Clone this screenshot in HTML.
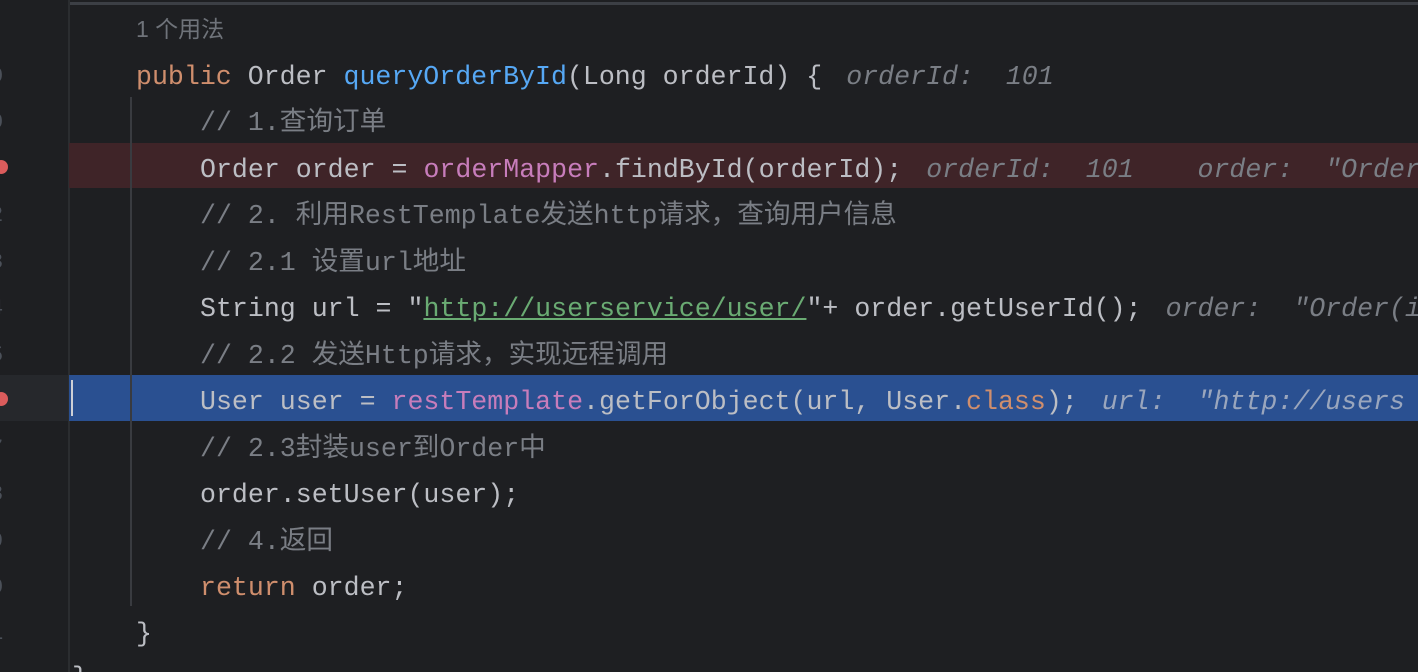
<!DOCTYPE html>
<html style="overflow:hidden;height:672px"><head><meta charset="utf-8"><style>
html,body{margin:0;overflow:hidden}
body{width:1418px;height:672px;background:#1e1f22;position:relative;font-family:"Liberation Mono","Noto Sans CJK SC",monospace;font-size:26.6px;color:#bcbec4}
#w{position:absolute;left:0;top:0;width:1418px;height:672px;overflow:hidden}
.l{position:absolute;left:0;height:46px;line-height:46px;white-space:pre}
.c{left:136px}.i{left:200px}
.k{color:#cf8e6d}.m{color:#56a8f5}.f{color:#c77dbb}.s{color:#6aab73;text-decoration:underline}.cm{color:#7a7e85}
.h{color:#7a7e85;font-style:italic;margin-left:8px}
.n{position:absolute;left:-10px;color:#4b5059;font-size:22px;height:46px;line-height:46px}
.bp{position:absolute;left:-6px;width:14px;height:14px;border-radius:50%;background:#db5c5c}
</style></head><body><div id="w">
<div style="position:absolute;left:68px;top:0;width:2px;height:672px;background:#2b2d30"></div>
<div style="position:absolute;left:70px;top:2px;right:0;height:3px;background:#3c3f45"></div>
<div style="position:absolute;left:69px;top:143px;right:0;height:45px;background:#3f2428"></div>
<div style="position:absolute;left:0;top:375px;width:68px;height:46px;background:#26282c"></div>
<div style="position:absolute;left:69px;top:375px;right:0;height:46px;background:#2a5091"></div>
<div style="position:absolute;left:71px;top:380px;width:2px;height:36px;background:#ced0d6"></div>
<div style="position:absolute;left:130px;top:97px;width:2px;height:509px;background:#393b40"></div>
<div class="n" style="top:54px">0</div><div class="n" style="top:100px">0</div>
<div class="bp" style="top:160px"></div><div class="n" style="top:193px">2</div>
<div class="n" style="top:240px">3</div><div class="n" style="top:286px">4</div><div class="n" style="top:333px">5</div>
<div class="bp" style="top:392px"></div><div class="n" style="top:426px">7</div><div class="n" style="top:472px">8</div>
<div class="n" style="top:519px">9</div><div class="n" style="top:565px">0</div><div class="n" style="top:611px">1</div>
<div class="l c" style="top:6px;font-family:'Liberation Sans','Noto Sans CJK SC',sans-serif;font-size:23px;color:#6f737a">1 个用法</div>
<div class="l c" style="top:54px"><span class="k">public</span> Order <span class="m">queryOrderById</span>(Long orderId) { <span class="h">orderId:  101</span></div>
<div class="l i cm" style="top:100px">// 1.查询订单</div>
<div class="l i" style="top:147px">Order order = <span class="f">orderMapper</span>.findById(orderId); <span class="h">orderId:  101    order:  "Order(</span></div>
<div class="l i cm" style="top:193px">// 2. 利用RestTemplate发送http请求，查询用户信息</div>
<div class="l i cm" style="top:240px">// 2.1 设置url地址</div>
<div class="l i" style="top:286px">String url = "<span class="s">http://userservice/user/</span>"+ order.getUserId(); <span class="h">order:  "Order(i</span></div>
<div class="l i cm" style="top:333px">// 2.2 发送Http请求，实现远程调用</div>
<div class="l i" style="top:379px">User user = <span class="f">restTemplate</span>.getForObject(url, User.<span class="k">class</span>); <span class="h" style="color:#9aa6bd">url:  "http://users</span></div>
<div class="l i cm" style="top:426px">// 2.3封装user到Order中</div>
<div class="l i" style="top:472px">order.setUser(user);</div>
<div class="l i cm" style="top:519px">// 4.返回</div>
<div class="l i" style="top:565px"><span class="k">return</span> order;</div>
<div class="l c" style="top:611px">}</div>
<div class="l" style="left:72px;top:655px">}</div>
</div></body></html>
